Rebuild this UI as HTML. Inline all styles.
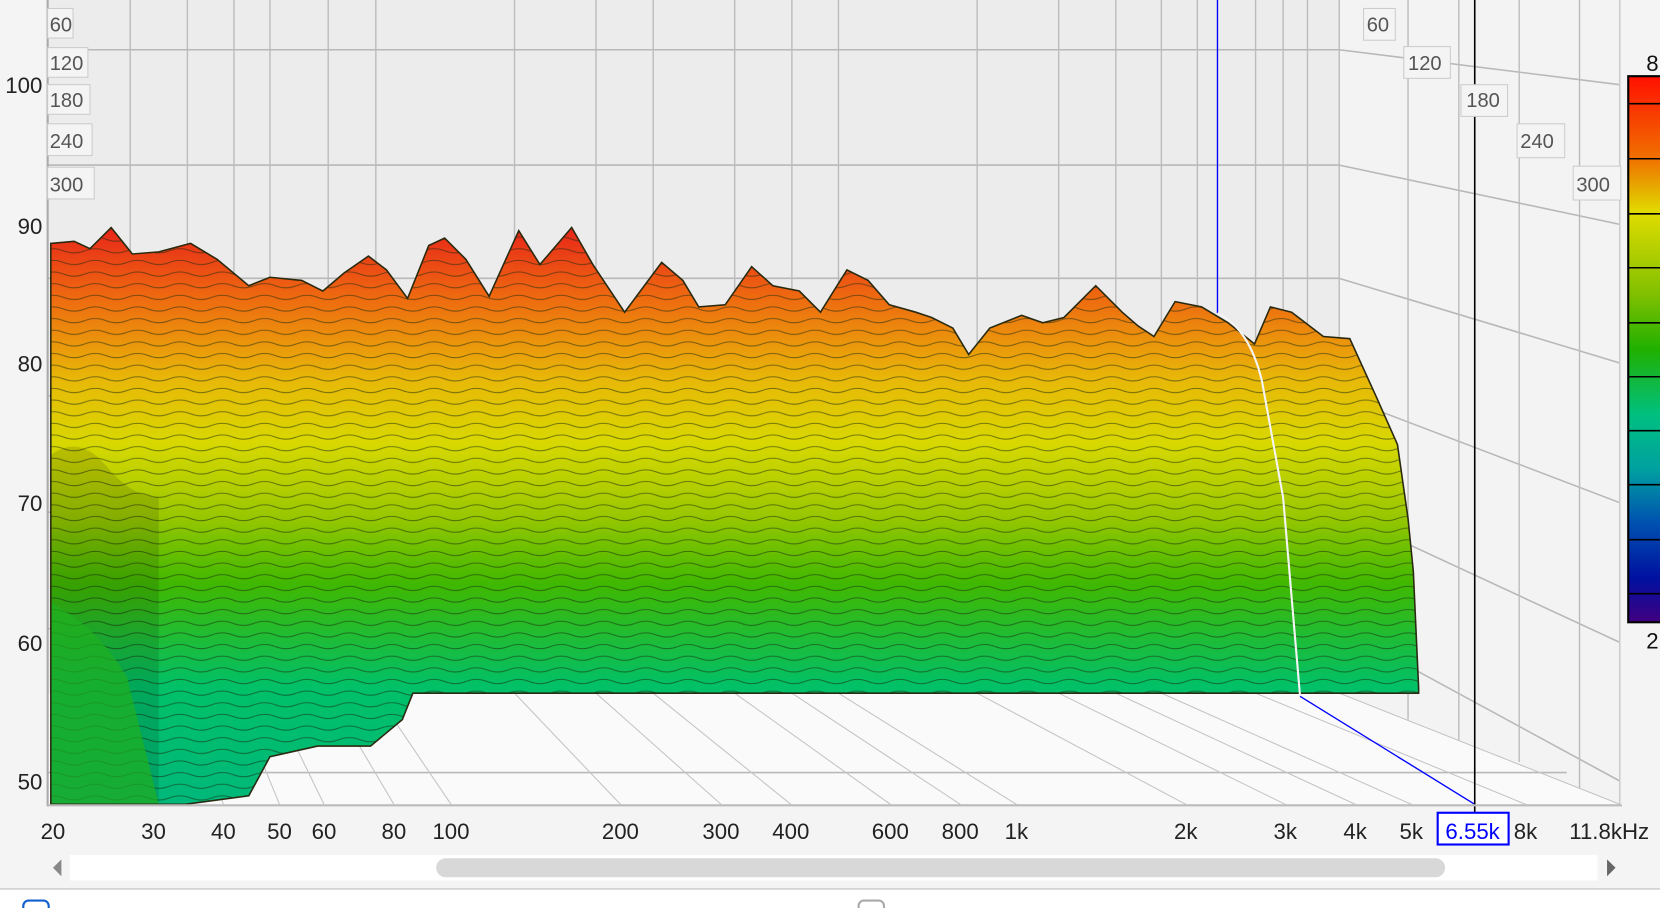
<!DOCTYPE html>
<html><head><meta charset="utf-8"><style>
html,body{margin:0;padding:0;background:#f4f4f4;overflow:hidden}
svg{display:block}
text{font-family:"Liberation Sans",sans-serif}
</style></head><body>
<svg width="1660" height="908" viewBox="0 0 1568 858" preserveAspectRatio="none" xmlns="http://www.w3.org/2000/svg">
<defs>
<linearGradient id="g" x1="0" y1="210" x2="0" y2="760" gradientUnits="userSpaceOnUse">
<stop offset="0" stop-color="#e8201a"/>
<stop offset="0.13" stop-color="#ee6a10"/>
<stop offset="0.27" stop-color="#e8b808"/>
<stop offset="0.38" stop-color="#d8d800"/>
<stop offset="0.5" stop-color="#9cc800"/>
<stop offset="0.62" stop-color="#40b800"/>
<stop offset="0.8" stop-color="#00c068"/>
<stop offset="1" stop-color="#00b87a"/>
</linearGradient>
<linearGradient id="cb" x1="0" y1="72" x2="0" y2="588" gradientUnits="userSpaceOnUse">
<stop offset="0" stop-color="#ff1000"/><stop offset="0.15" stop-color="#f07000"/>
<stop offset="0.25" stop-color="#e0dc00"/><stop offset="0.4" stop-color="#80c000"/>
<stop offset="0.5" stop-color="#20b000"/><stop offset="0.62" stop-color="#00c080"/>
<stop offset="0.72" stop-color="#00a0a0"/><stop offset="0.82" stop-color="#0050b0"/>
<stop offset="0.92" stop-color="#0010a0"/><stop offset="1" stop-color="#400080"/>
</linearGradient>
<pattern id="lines" width="40" height="11" patternUnits="userSpaceOnUse">
<path d="M0 6 Q10 2 20 6 T40 6" fill="none" stroke="#1a2a10" stroke-opacity="0.55" stroke-width="1"/>
</pattern>
<clipPath id="shape"><path id="sp" d="M48 230 L70 228 85 235 105 215 125 240 150 238 180 230 205 245 235 270 255 262 285 265 305 275 325 258 348 242 365 255 385 282 405 232 420 225 440 245 462 280 490 218 510 250 540 215 560 250 590 295 625 248 645 265 660 290 685 288 710 252 730 270 755 275 775 295 800 255 820 265 840 288 865 295 880 300 900 310 915 335 935 310 965 298 985 305 1005 300 1035 270 1060 295 1075 308 1090 318 1110 285 1135 290 1160 305 1185 325 1200 290 1220 295 1250 318 1275 320 1300 375 1320 420 1330 490 1335 540 1340 650 1340 655 390 655 380 680 350 705 300 705 255 715 235 752 175 760 48 760Z"/></clipPath>
</defs>
<rect width="1568" height="858" fill="#f4f4f4"/>
<!-- back wall -->
<rect x="45" y="0" width="1220" height="655" fill="#ececec"/>
<!-- right wall -->
<polygon points="1265,0 1530,0 1530,760 1265,655" fill="#f3f3f3"/>
<!-- floor -->
<polygon points="45,655 1265,655 1530,760 45,760" fill="#fafafa"/>
<g stroke="#b8b8b8" stroke-width="1.5" fill="none">
<line x1="45" y1="47" x2="1265" y2="47"/><line x1="45" y1="156" x2="1265" y2="156"/><line x1="45" y1="263" x2="1265" y2="263"/>
<line x1="45" y1="374" x2="1265" y2="374"/><line x1="45" y1="484" x2="1265" y2="484"/><line x1="45" y1="594" x2="1265" y2="594"/>
<line x1="1265" y1="47" x2="1530" y2="80"/><line x1="1265" y1="156" x2="1530" y2="212"/><line x1="1265" y1="263" x2="1530" y2="343"/>
<line x1="1265" y1="374" x2="1530" y2="475"/><line x1="1265" y1="484" x2="1530" y2="607"/><line x1="1265" y1="594" x2="1530" y2="738"/>
<line x1="45" y1="730" x2="1480" y2="730"/>
</g>
<g stroke="#bbb" stroke-width="1.3">
<line x1="123" y1="0" x2="123" y2="655"/><line x1="177" y1="0" x2="177" y2="655"/><line x1="221" y1="0" x2="221" y2="655"/>
<line x1="255" y1="0" x2="255" y2="655"/><line x1="310" y1="0" x2="310" y2="655"/><line x1="355" y1="0" x2="355" y2="655"/>
<line x1="486" y1="0" x2="486" y2="655"/><line x1="563" y1="0" x2="563" y2="655"/><line x1="617" y1="0" x2="617" y2="655"/>
<line x1="694" y1="0" x2="694" y2="655"/><line x1="748" y1="0" x2="748" y2="655"/><line x1="792" y1="0" x2="792" y2="655"/>
<line x1="923" y1="0" x2="923" y2="655"/><line x1="1000" y1="0" x2="1000" y2="655"/><line x1="1054" y1="0" x2="1054" y2="655"/>
<line x1="1097" y1="0" x2="1097" y2="655"/><line x1="1131" y1="0" x2="1131" y2="655"/><line x1="1186" y1="0" x2="1186" y2="655"/>
<line x1="1212" y1="0" x2="1212" y2="655"/><line x1="1235" y1="0" x2="1235" y2="655"/><line x1="1265" y1="0" x2="1265" y2="655"/>
<line x1="1330" y1="0" x2="1330" y2="680"/><line x1="1378" y1="0" x2="1378" y2="700"/><line x1="1435" y1="0" x2="1435" y2="720"/><line x1="1492" y1="0" x2="1492" y2="745"/>
</g>
<g stroke="#c4c4c4" stroke-width="1">
<line x1="123" y1="655" x2="145" y2="760"/><line x1="177" y1="655" x2="211" y2="760"/><line x1="221" y1="655" x2="264" y2="760"/>
<line x1="255" y1="655" x2="306" y2="760"/><line x1="310" y1="655" x2="372" y2="760"/><line x1="355" y1="655" x2="426" y2="760"/>
<line x1="486" y1="655" x2="586" y2="760"/><line x1="563" y1="655" x2="681" y2="760"/><line x1="617" y1="655" x2="747" y2="760"/>
<line x1="694" y1="655" x2="841" y2="760"/><line x1="748" y1="655" x2="907" y2="760"/><line x1="792" y1="655" x2="960" y2="760"/>
<line x1="923" y1="655" x2="1120" y2="760"/><line x1="1000" y1="655" x2="1214" y2="760"/><line x1="1054" y1="655" x2="1280" y2="760"/>
<line x1="1097" y1="655" x2="1333" y2="760"/><line x1="1186" y1="655" x2="1441" y2="760"/><line x1="1265" y1="655" x2="1530" y2="760"/>
</g>
<!-- waterfall -->
<g clip-path="url(#shape)">
<rect x="40" y="200" width="1310" height="570" fill="url(#g)"/>
<rect x="40" y="200" width="1310" height="570" fill="url(#lines)"/>
<path d="M48 430 Q75 410 100 440 T150 470 L150 760 L48 760Z" fill="#000" opacity="0.12"/>
<path d="M48 570 Q90 590 120 640 L150 760 L48 760Z" fill="#20b020" opacity="0.7"/>
</g>
<use href="#sp" fill="none" stroke="#2a2a10" stroke-width="1.5"/>
<!-- cursors -->
<line x1="1150" y1="0" x2="1150" y2="296" stroke="#0000ff" stroke-width="1.3"/>
<path d="M1150 296 Q1180 310 1192 360 L1212 470 L1228 658" fill="none" stroke="#f4f4f4" stroke-width="2"/>
<line x1="1228" y1="658" x2="1393" y2="760" stroke="#0000ff" stroke-width="1.3"/>
<line x1="1393" y1="0" x2="1393" y2="770" stroke="#000" stroke-width="1.5"/>
<line x1="45" y1="0" x2="45" y2="762" stroke="#aaa" stroke-width="2"/>
<line x1="45" y1="761" x2="1532" y2="761" stroke="#bbb" stroke-width="2"/>
<line x1="1530" y1="0" x2="1530" y2="760" stroke="#ccc" stroke-width="1.5"/>
<!-- time labels -->
<g font-size="19" fill="#555">
<rect x="45" y="8" width="24" height="28" fill="#f4f4f4" stroke="#ccc"/><text x="47" y="30">60</text>
<rect x="45" y="45" width="38" height="28" fill="#f4f4f4" stroke="#ccc"/><text x="47" y="66">120</text>
<rect x="45" y="80" width="40" height="28" fill="#f4f4f4" stroke="#ccc"/><text x="47" y="101">180</text>
<rect x="45" y="117" width="42" height="30" fill="#f4f4f4" stroke="#ccc"/><text x="47" y="140">240</text>
<rect x="45" y="158" width="44" height="30" fill="#f4f4f4" stroke="#ccc"/><text x="47" y="181">300</text>
<rect x="1288" y="8" width="30" height="30" fill="#f4f4f4" stroke="#ccc"/><text x="1291" y="30">60</text>
<rect x="1326" y="44" width="44" height="30" fill="#f4f4f4" stroke="#ccc"/><text x="1330" y="66">120</text>
<rect x="1380" y="80" width="44" height="30" fill="#f4f4f4" stroke="#ccc"/><text x="1385" y="101">180</text>
<rect x="1433" y="117" width="45" height="32" fill="#f4f4f4" stroke="#ccc"/><text x="1436" y="140">240</text>
<rect x="1486" y="157" width="45" height="32" fill="#f4f4f4" stroke="#ccc"/><text x="1489" y="181">300</text>
</g>
<!-- y labels -->
<g font-size="21" fill="#222" text-anchor="end">
<text x="40" y="88">100</text><text x="40" y="221">90</text><text x="40" y="351">80</text>
<text x="40" y="483">70</text><text x="40" y="615">60</text><text x="40" y="746">50</text>
</g>
<!-- x labels -->
<g font-size="21" fill="#222" text-anchor="middle">
<text x="50" y="793">20</text><text x="145" y="793">30</text><text x="211" y="793">40</text><text x="264" y="793">50</text>
<text x="306" y="793">60</text><text x="372" y="793">80</text><text x="426" y="793">100</text><text x="586" y="793">200</text>
<text x="681" y="793">300</text><text x="747" y="793">400</text><text x="841" y="793">600</text><text x="907" y="793">800</text>
<text x="960" y="793">1k</text><text x="1120" y="793">2k</text><text x="1214" y="793">3k</text><text x="1280" y="793">4k</text>
<text x="1333" y="793">5k</text><text x="1441" y="793">8k</text><text x="1520" y="793">11.8kHz</text>
</g>
<rect x="1358" y="768" width="67" height="30" fill="#fff" stroke="#0000ff" stroke-width="2"/>
<text x="1391" y="793" font-size="21" fill="#0000ff" text-anchor="middle">6.55k</text>
<!-- colorbar -->
<text x="1555" y="67" font-size="21" fill="#111">8</text>
<text x="1555" y="613" font-size="21" fill="#111">2</text>
<rect x="1538" y="72" width="40" height="516" fill="url(#cb)" stroke="#000" stroke-width="2"/>
<g stroke="#000" stroke-width="1.5">
<line x1="1538" y1="98" x2="1568" y2="98"/><line x1="1538" y1="150" x2="1568" y2="150"/><line x1="1538" y1="202" x2="1568" y2="202"/>
<line x1="1538" y1="253" x2="1568" y2="253"/><line x1="1538" y1="305" x2="1568" y2="305"/><line x1="1538" y1="356" x2="1568" y2="356"/>
<line x1="1538" y1="407" x2="1568" y2="407"/><line x1="1538" y1="458" x2="1568" y2="458"/><line x1="1538" y1="510" x2="1568" y2="510"/>
<line x1="1538" y1="561" x2="1568" y2="561"/>
</g>
<!-- scrollbar -->
<rect x="66" y="808" width="1443" height="24" fill="#fff"/>
<rect x="412" y="811" width="953" height="18" rx="9" fill="#d8d8d8"/>
<polygon points="58,812 58,828 50,820" fill="#888"/>
<polygon points="1518,812 1518,828 1526,820" fill="#666"/>
<!-- bottom panel -->
<rect x="0" y="840" width="1568" height="18" fill="#fff"/>
<line x1="0" y1="840" x2="1568" y2="840" stroke="#d0d0d0" stroke-width="1.5"/>
<rect x="22" y="851" width="24" height="20" rx="5" fill="none" stroke="#1060d0" stroke-width="2"/>
<rect x="811" y="851" width="24" height="20" rx="5" fill="none" stroke="#aaa" stroke-width="2"/>
</svg>
</body></html>
